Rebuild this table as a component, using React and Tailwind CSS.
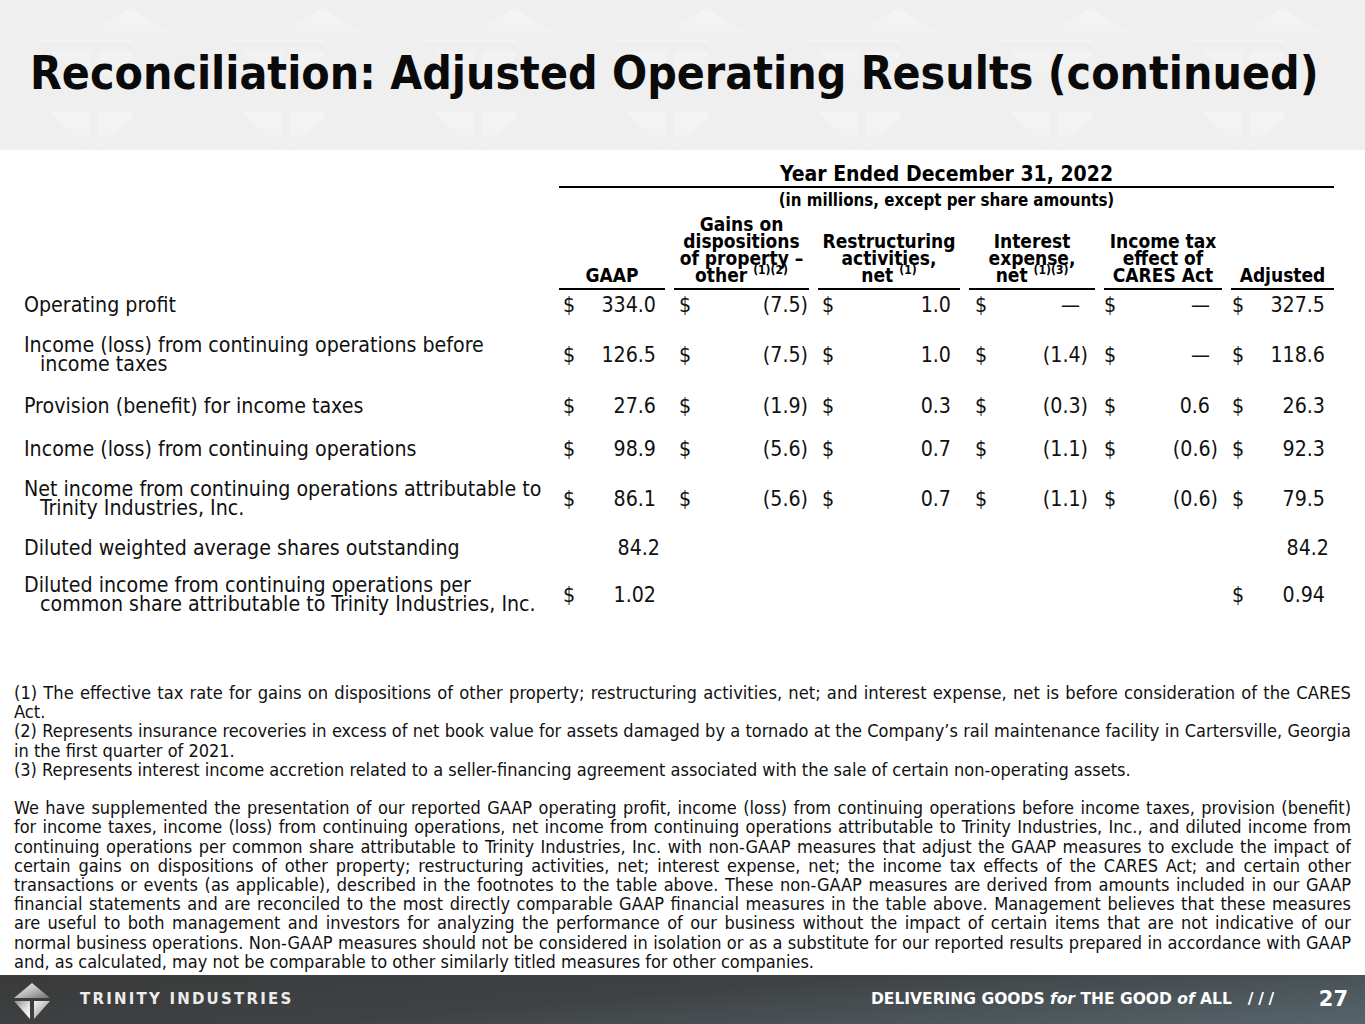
import React from "react";

const cols = [
  { w: 106, pl: 4, pr: 1 },
  { w: 135, pl: 5, pr: 1 },
  { w: 142, pl: 4, pr: 1 },
  { w: 126, pl: 6, pr: 7 },
  { w: 118, pl: 0, pr: 4 },
  { w: 103, pl: 1, pr: 1 },
];

const rows = [
  { label: ["Operating profit"], v: ["334.0", "(7.5)", "1.0", "—", "—", "327.5"], mt: "mt-[5px]" },
  {
    label: ["Income (loss) from continuing operations before", "income taxes"],
    v: ["126.5", "(7.5)", "1.0", "(1.4)", "—", "118.6"],
    mt: "mt-[21px]",
  },
  { label: ["Provision (benefit) for income taxes"], v: ["27.6", "(1.9)", "0.3", "(0.3)", "0.6", "26.3"], mt: "mt-[23px]" },
  { label: ["Income (loss) from continuing operations"], v: ["98.9", "(5.6)", "0.7", "(1.1)", "(0.6)", "92.3"], mt: "mt-[24px]" },
  {
    label: ["Net income from continuing operations attributable to", "Trinity Industries, Inc."],
    v: ["86.1", "(5.6)", "0.7", "(1.1)", "(0.6)", "79.5"],
    mt: "mt-[21px]",
  },
  { label: ["Diluted weighted average shares outstanding"], v: ["84.2", null, null, null, null, "84.2"], plain: true, mt: "mt-[21px]" },
  {
    label: ["Diluted income from continuing operations per", "common share attributable to Trinity Industries, Inc."],
    v: ["1.02", null, null, null, null, "0.94"],
    mt: "mt-[18px]",
  },
];

const Sup = ({ children }) => (
  <span className="relative -top-[8px] text-[12px] leading-none">{children}</span>
);

const headers = [
  <>GAAP</>,
  <>
    Gains on
    <br />
    dispositions
    <br />
    of property –
    <br />
    other <Sup>(1)(2)</Sup>
  </>,
  <>
    Restructuring
    <br />
    activities,
    <br />
    net <Sup>(1)</Sup>
  </>,
  <>
    Interest
    <br />
    expense,
    <br />
    net <Sup>(1)(3)</Sup>
  </>,
  <>
    Income tax
    <br />
    effect of
    <br />
    CARES Act
  </>,
  <>Adjusted</>,
];

const HeaderPattern = () => (
  <svg className="absolute inset-0" width="1365" height="150" viewBox="0 0 1365 150">
    <defs>
      <linearGradient id="tri" x1="0" y1="0" x2="0" y2="1">
        <stop offset="0" stopColor="#ffffff" stopOpacity="0.8" />
        <stop offset="1" stopColor="#ffffff" stopOpacity="0.15" />
      </linearGradient>
      <pattern id="pat" width="192" height="150" patternUnits="userSpaceOnUse" x="-60">
        <polygon points="190,8 148,34 232,34" fill="url(#tri)" opacity="0.45" />
        <polygon points="-2,8 -44,34 40,34" fill="url(#tri)" opacity="0.45" />
        <polygon points="110,52 150,52 150,84" fill="url(#tri)" opacity="0.3" />
        <polygon points="158,52 198,52 158,84" fill="url(#tri)" opacity="0.3" />
        <polygon points="110,112 150,112 150,150" fill="url(#tri)" opacity="0.4" />
        <polygon points="158,112 198,112 158,150" fill="url(#tri)" opacity="0.4" />
        <rect x="100" y="40" width="110" height="2" fill="#ffffff" opacity="0.3" />
      </pattern>
    </defs>
    <rect width="1365" height="150" fill="url(#pat)" />
  </svg>
);

const Logo = () => (
  <svg width="40" height="40" viewBox="0 0 40 40">
    <defs>
      <linearGradient id="lg1" x1="0" y1="0" x2="1" y2="1">
        <stop offset="0" stopColor="#f4f4f4" />
        <stop offset="0.5" stopColor="#bdbdbd" />
        <stop offset="1" stopColor="#6d6d6d" />
      </linearGradient>
      <linearGradient id="lg2" x1="0" y1="0" x2="1" y2="1">
        <stop offset="0" stopColor="#8a8a8a" />
        <stop offset="0.6" stopColor="#e6e6e6" />
        <stop offset="1" stopColor="#ffffff" />
      </linearGradient>
    </defs>
    <polygon points="19,2 1,17 37,17" fill="url(#lg1)" />
    <polygon points="1,20 17,20 17,38" fill="url(#lg2)" />
    <polygon points="21,20 37,20 21,38" fill="url(#lg1)" />
  </svg>
);

export default function App() {
  const tpl = "grid grid-cols-[526px_106px_135px_142px_126px_118px_103px] gap-x-[9px]";
  return (
    <div className="w-[1365px] h-[1024px] bg-white flex flex-col overflow-hidden font-['DejaVu_Sans_Condensed','DejaVu_Sans',sans-serif] font-stretch-condensed text-black">
      <header className="relative h-[150px] shrink-0 bg-[#efeff0]">
        <HeaderPattern />
        <h1 className="relative pl-[30px] pt-[48px] text-[46px] leading-[50px] font-bold text-[#0a0a0a]">
          Reconciliation: Adjusted Operating Results (continued)
        </h1>
      </header>

      <section className="pl-[24px] pt-[12px]">
        <div className={tpl}>
          <div />
          <div className="col-span-6 flex flex-col items-center font-bold">
            <div className="text-[21px] leading-[24px]">Year Ended December 31, 2022</div>
            <div className="w-full border-b-2 border-black" />
            <div className="text-[16.8px] leading-[18px] mt-[3px]">(in millions, except per share amounts)</div>
          </div>
          {[<div key="e" />].concat(
            headers.map((h, i) => (
              <div
                key={i}
                className="mt-[7px] flex flex-col justify-end items-center text-center font-bold text-[19px] leading-[17px] pb-[4px] border-b-2 border-black"
              >
                <div>{h}</div>
              </div>
            ))
          )}
        </div>

        {rows.map((r, ri) => (
          <div key={ri} className={`${tpl} ${r.mt} items-center text-[21.2px] leading-[19px] text-[#111]`}>
            <div>
              {r.label.map((l, li) => (
                <div key={li} className={li > 0 ? "pl-[16px]" : ""}>
                  {l}
                </div>
              ))}
            </div>
            {r.v.map((v, ci) => {
              const c = cols[ci];
              if (v === null) return <div key={ci} />;
              const paren = v.endsWith(")");
              const pr = r.plain ? c.pr + 4 : paren ? c.pr : c.pr + 8;
              return (
                <div
                  key={ci}
                  className="flex justify-between"
                  style={{ paddingLeft: c.pl, paddingRight: pr }}
                >
                  <span>{r.plain ? "" : "$"}</span>
                  <span>{v}</span>
                </div>
              );
            })}
          </div>
        ))}
      </section>

      <section className="mt-[70px] px-[14px] text-[18px] leading-[19.2px] text-[#111] text-justify">
        <p className="text-[18.2px]">
          (1) The effective tax rate for gains on dispositions of other property; restructuring activities, net; and
          interest expense, net is before consideration of the CARES Act.
        </p>
        <p>
          (2) Represents insurance recoveries in excess of net book value for assets damaged by a tornado at the
          Company’s rail maintenance facility in Cartersville, Georgia in the first quarter of 2021.
        </p>
        <p>
          (3) Represents interest income accretion related to a seller-financing agreement associated with the sale of
          certain non-operating assets.
        </p>
        <p className="mt-[19.2px]">
          We have supplemented the presentation of our reported GAAP operating profit, income (loss) from continuing
          operations before income taxes, provision (benefit) for income taxes, income (loss) from continuing operations,
          net income from continuing operations attributable to Trinity Industries, Inc., and diluted income from
          continuing operations per common share attributable to Trinity Industries, Inc. with non-GAAP measures that
          adjust the GAAP measures to exclude the impact of certain gains on dispositions of other property; restructuring
          activities, net; interest expense, net; the income tax effects of the CARES Act; and certain other transactions
          or events (as applicable), described in the footnotes to the table above. These non-GAAP measures are derived
          from amounts included in our GAAP financial statements and are reconciled to the most directly comparable GAAP
          financial measures in the table above. Management believes that these measures are useful to both management
          and investors for analyzing the performance of our business without the impact of certain items that are not
          indicative of our normal business operations. Non-GAAP measures should not be considered in isolation or as a
          substitute for our reported results prepared in accordance with GAAP and, as calculated, may not be comparable
          to other similarly titled measures for other companies.
        </p>
      </section>

      <footer className="mt-auto h-[49px] shrink-0 flex items-center bg-[linear-gradient(175deg,#3a3a3a_0%,#3f4244_45%,#56656b_100%)] font-['DejaVu_Sans',sans-serif] font-stretch-normal">
        <div className="pl-[13px] pt-[2px]">
          <Logo />
        </div>
        <div className="ml-[27px] text-[15px] font-bold tracking-[2.2px] text-[#ececec]">
          TRINITY INDUSTRIES
        </div>
        <div className="ml-auto flex items-center text-white font-bold">
          <span className="text-[15.5px]">
            DELIVERING GOODS <i>for</i> THE GOOD <i>of</i> ALL
          </span>
          <span className="ml-[16px] text-[15.5px] tracking-[0.3em]">///</span>
          <span className="ml-[40px] mr-[17px] text-[21px]">27</span>
        </div>
      </footer>
    </div>
  );
}
